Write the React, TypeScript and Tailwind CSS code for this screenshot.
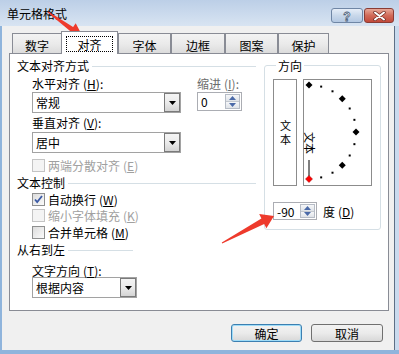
import React from 'react';

type Tab = { label: string; w: string; active?: boolean };

const tabs: Tab[] = [
  { label: '数字', w: 'w-[50px]' },
  { label: '对齐', w: 'w-[57px]', active: true },
  { label: '字体', w: 'w-[53px]' },
  { label: '边框', w: 'w-[54px]' },
  { label: '图案', w: 'w-[53px]' },
  { label: '保护', w: 'w-[51px]' },
];

function Mn({ k }: { k: string }) {
  return (
    <span className="ml-[3px]">
      (<span className="underline underline-offset-1">{k}</span>)
    </span>
  );
}

function GroupHeader({ text, className = '' }: { text: string; className?: string }) {
  return (
    <div className={`flex items-center h-[13px] ${className}`}>
      <span className="whitespace-nowrap">{text}</span>
      <div className="flex-1 h-px bg-[#d5dfe5] ml-[3px] mt-[1px]" />
    </div>
  );
}

function DropArrow() {
  return (
    <svg width="7" height="4" viewBox="0 0 7 4">
      <path d="M0 0h7L3.5 4z" fill="#000" />
    </svg>
  );
}

function Combo({ text, className = '' }: { text: string; className?: string }) {
  return (
    <div className={`h-[21px] border border-[#a2a2a2] bg-white flex items-center ${className}`}>
      <span className="pl-[3px] flex-1 leading-[13px]">{text}</span>
      <div className="w-[16px] h-[19px] border border-[#7a7a7a] bg-gradient-to-b from-[#f4f4f4] via-[#ebebeb] to-[#d4d4d4] flex items-center justify-center">
        <DropArrow />
      </div>
    </div>
  );
}

function SpinArrows() {
  return (
    <div className="w-[15px] flex flex-col my-[1px] mr-[1px] border border-[#b6bcc6]">
      <div className="flex-1 bg-gradient-to-b from-[#f6f7f9] to-[#dfe3e8] flex items-center justify-center border-b border-[#c3c8cf]">
        <svg width="7" height="4" viewBox="0 0 7 4">
          <path d="M0 4h7L3.5 0z" fill="#4b6aa8" />
        </svg>
      </div>
      <div className="flex-1 bg-gradient-to-b from-[#f6f7f9] to-[#dfe3e8] flex items-center justify-center">
        <svg width="7" height="4" viewBox="0 0 7 4">
          <path d="M0 0h7L3.5 4z" fill="#4b6aa8" />
        </svg>
      </div>
    </div>
  );
}

function Spin({ value, className = '' }: { value: string; className?: string }) {
  return (
    <div className={`border border-[#abadb3] bg-white flex ${className}`}>
      <span className="flex-1 pl-[3px] self-center leading-[13px]">{value}</span>
      <SpinArrows />
    </div>
  );
}

function Check({
  label,
  k,
  checked,
  disabled,
  className = '',
}: {
  label: string;
  k: string;
  checked?: boolean;
  disabled?: boolean;
  className?: string;
}) {
  return (
    <div className={`flex items-center h-[13px] ${disabled ? 'text-[#a0a0a0]' : ''} ${className}`}>
      <div
        className={`w-[13px] h-[13px] border flex items-center justify-center ${
          disabled ? 'border-[#c4c4c4] bg-[#f4f4f4]' : 'border-[#8e8f8f] bg-gradient-to-br from-[#dcdcdc] to-[#fbfbfb]'
        }`}
      >
        {checked && (
          <svg width="9" height="9" viewBox="0 0 9 9">
            <path d="M1 4.5l2.2 2.6L8 1" stroke="#3b5aa5" strokeWidth="1.8" fill="none" />
          </svg>
        )}
      </div>
      <span className="ml-[3px] whitespace-nowrap">
        {label}
        <Mn k={k} />
      </span>
    </div>
  );
}

function Dial() {
  const cx = 5;
  const cy = 52;
  const r = 47;
  const big = [90, 45, 0, -45];
  const small = [75, 60, 30, 15, -15, -30, -60, -75];
  const pt = (a: number) => [cx + r * Math.cos((a * Math.PI) / 180), cy - r * Math.sin((a * Math.PI) / 180)];
  const diamond = (x: number, y: number, s: number) => `${x},${y - s} ${x + s},${y} ${x},${y + s} ${x - s},${y}`;
  const [rx, ry] = pt(-90);
  return (
    <svg width="67" height="105" viewBox="0 0 67 105" overflow="visible">
      {big.map((a) => {
        const [x, y] = pt(a);
        return <polygon key={a} points={diamond(x, y, 3.5)} fill="#000" />;
      })}
      {small.map((a) => {
        const [x, y] = pt(a);
        return <rect key={a} x={x - 1} y={y - 1} width="2" height="2" fill="#000" />;
      })}
      <text
        transform={`translate(${cx} ${cy}) rotate(90)`}
        x="0"
        y="4"
        fontSize="11"
        fontFamily="'Noto Sans CJK SC', sans-serif"
        fill="#000"
      >
        文本
      </text>
      <line x1={cx} y1="80" x2={cx} y2="96" stroke="#000" strokeWidth="1" />
      <polygon points={diamond(rx, ry, 3.5)} fill="#ff0000" stroke="#900" strokeWidth="0.5" />
    </svg>
  );
}

function TitleButtons() {
  return (
    <div className="ml-auto mt-[8px] mr-[5px] flex gap-[1px]">
      <div className="w-[32px] h-[15px] rounded-[3px] border border-[#6f86a5] bg-gradient-to-b from-[#e6eef8] via-[#c9d8ea] to-[#b3c8e2] flex items-center justify-center">
        <svg width="10" height="12" viewBox="0 0 10 12">
          <text
            x="5"
            y="10.5"
            textAnchor="middle"
            fontSize="12"
            fontWeight="bold"
            fontFamily="'Liberation Sans', sans-serif"
            fill="#fff"
            stroke="#4a5d78"
            strokeWidth="0.8"
          >
            ?
          </text>
        </svg>
      </div>
      <div className="w-[30px] h-[15px] rounded-[3px] border border-[#8a3c34] bg-gradient-to-b from-[#e7a898] via-[#d16a58] to-[#c2493b] flex items-center justify-center">
        <svg width="13" height="10" viewBox="0 0 13 10">
          <path d="M2 1.5L11 8.5M11 1.5L2 8.5" stroke="#6b2a22" strokeWidth="3.4" strokeLinecap="round" />
          <path d="M2 1.5L11 8.5M11 1.5L2 8.5" stroke="#fff" strokeWidth="2" strokeLinecap="round" />
        </svg>
      </div>
    </div>
  );
}

export default function App() {
  return (
    <div className="relative w-[399px] h-[354px] overflow-hidden bg-[#c9daee] flex flex-col font-['Noto_Sans_CJK_SC','Noto_Sans',sans-serif] text-[12px] leading-[13px] text-black">
      {/* title bar */}
      <div className="h-[26px] shrink-0 flex bg-gradient-to-b from-[#bccfe7] to-[#d8e4f2]">
        <span className="pl-[7px] pt-[7px] text-[12px] leading-[13px]">单元格格式</span>
        <TitleButtons />
      </div>

      <div className="flex-1 flex min-h-0">
        <div className="w-[2px] bg-[#8fb4dc]" />
        <div className="flex-1 flex flex-col bg-[#f0f0f0]">
          {/* tabs */}
          <div className="flex items-end h-[22px] mt-[5px] ml-[10px]">
            {tabs.map((t) =>
              t.active ? (
                <div
                  key={t.label}
                  className={`${t.w} -ml-[1px] h-[23px] -mb-[1px] relative z-10 bg-white border border-b-0 border-[#898c95] pt-[4px] pl-[4px]`}
                >
                  <div className="w-[47px] h-[16px] border border-dotted border-black flex items-center justify-center pt-[1px]">
                    {t.label}
                  </div>
                </div>
              ) : (
                <div
                  key={t.label}
                  className={`${t.w} h-[20px] border border-b-0 border-[#898c95] bg-gradient-to-b from-[#f3f3f3] via-[#ebebeb] to-[#dcdcdc] flex items-center justify-center pt-[3px]`}
                >
                  {t.label}
                </div>
              ),
            )}
          </div>

          {/* panel */}
          <div className="ml-[7px] mr-[5px] h-[258px] border border-[#898c95] bg-white flex">
            <div className="ml-[7px] w-[239px] pt-[5px]">
              <GroupHeader text="文本对齐方式" />
              <div className="ml-[15px] mt-[5px] flex">
                <div className="w-[149px]">
                  <div className="h-[13px]">
                    水平对齐
                    <Mn k="H" />:
                  </div>
                  <Combo text="常规" className="mt-[2px]" />
                  <div className="h-[13px] mt-[3px]">
                    垂直对齐
                    <Mn k="V" />:
                  </div>
                  <Combo text="居中" className="mt-[3px]" />
                </div>
                <div className="ml-[16px]">
                  <div className="h-[13px] text-[#6d6d6d]">
                    缩进
                    <Mn k="I" />:
                  </div>
                  <Spin value="0" className="mt-[2px] w-[45px] h-[19px]" />
                </div>
              </div>
              <Check label="两端分散对齐" k="E" disabled className="ml-[15px] mt-[6px]" />
              <GroupHeader text="文本控制" className="mt-[4px]" />
              <Check label="自动换行" k="W" checked className="ml-[15px] mt-[4px]" />
              <Check label="缩小字体填充" k="K" disabled className="ml-[15px] mt-[3px]" />
              <Check label="合并单元格" k="M" className="ml-[15px] mt-[4px]" />
              <GroupHeader text="从右到左" className="mt-[4px] w-[116px]" />
              <div className="ml-[15px] mt-[8px] h-[13px]">
                文字方向
                <Mn k="T" />:
              </div>
              <Combo text="根据内容" className="ml-[15px] w-[105px]" />
            </div>

            <div className="ml-[8px] w-[116px] pt-[5px]">
              <fieldset className="border border-[#d5dfe5] rounded-[3px] px-[8px] pt-[7px] pb-[9px]">
                <legend className="ml-[3px] px-[2px] leading-[13px]">方向</legend>
                <div className="flex gap-[6px] h-[107px]">
                  <div className="w-[24px] border border-[#8c8c8c] flex items-center justify-center">
                    <span className="[writing-mode:vertical-rl] tracking-[3px] text-[11px] leading-[11px] pt-[3px]">文本</span>
                  </div>
                  <div className="w-[69px] border border-[#8c8c8c]">
                    <Dial />
                  </div>
                </div>
                <div className="flex items-center mt-[16px]">
                  <Spin value="-90" className="w-[44px] h-[18px]" />
                  <span className="ml-[6px]">
                    度<Mn k="D" />
                  </span>
                </div>
              </fieldset>
            </div>
          </div>

          {/* buttons */}
          <div className="mt-[13px] flex justify-end gap-[9px] pr-[11px]">
            <button className="w-[71px] h-[18px] rounded-[3px] border border-[#3c7fb1] shadow-[inset_0_0_0_1px_#9edcf8] bg-gradient-to-b from-[#f2f2f2] via-[#ebebeb] to-[#d8d8d8] flex items-center justify-center leading-[13px]">
              确定
            </button>
            <button className="w-[72px] h-[18px] rounded-[3px] border border-[#707070] bg-gradient-to-b from-[#f2f2f2] via-[#ebebeb] to-[#d8d8d8] flex items-center justify-center leading-[13px]">
              取消
            </button>
          </div>
        </div>
        <div className="w-[5px] bg-[#c9daee] border-l border-[#5d6f86]" />
      </div>
      <div className="h-[4px] shrink-0 bg-[#8fb4dc]" />

      {/* annotation arrows */}
      <svg className="absolute inset-0 pointer-events-none" width="399" height="354" viewBox="0 0 399 354">
        <polygon
          points="47.7,12.4 70.1,30.9 67.5,34.6 83,37 75.7,23.2 73.1,26.9 48.3,11.6"
          fill="#ee3a2c"
        />
        <polygon
          points="222.2,243.4 264.2,223.9 266.4,228.3 274,216 259.2,214.1 261.4,218.5 221.8,242.6"
          fill="#ee3a2c"
        />
      </svg>
    </div>
  );
}
